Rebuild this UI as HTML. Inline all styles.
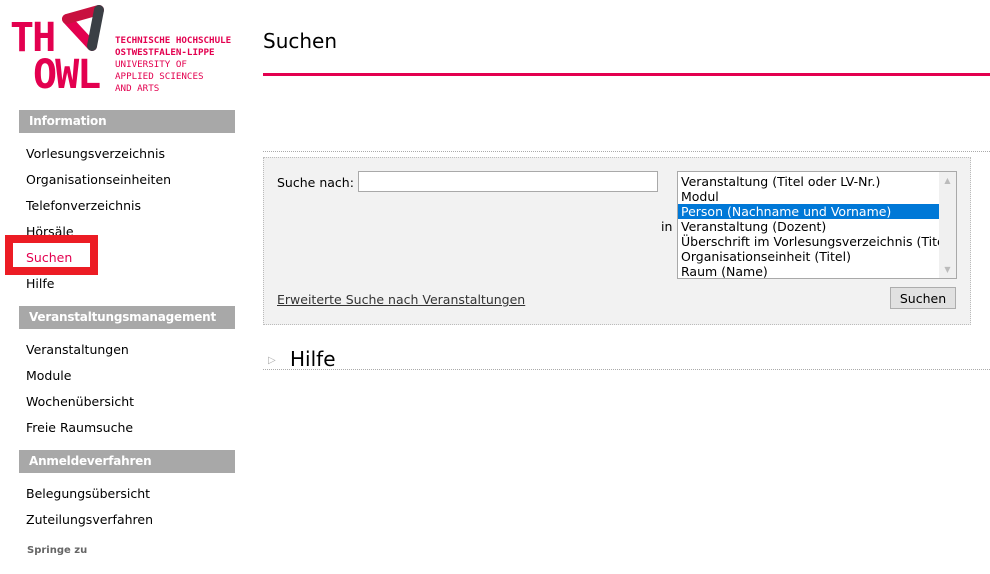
<!DOCTYPE html>
<html><head><meta charset="utf-8"><style>
body{margin:0;width:990px;height:574px;background:#fff;font-family:Verdana,"DejaVu Sans","Liberation Sans",sans-serif;position:relative;overflow:hidden;color:#000}
.a{position:absolute;white-space:nowrap}
.h{position:absolute;left:19px;width:216px;height:23px;background:#a8a8a8;color:#fff;font-weight:bold;font-size:12px;letter-spacing:-0.2px;line-height:23px;padding-left:10px;box-sizing:border-box;overflow:hidden}
.i{position:absolute;left:26px;font-size:12.5px}
.logo{color:#e3004f;font-family:"DejaVu Sans Mono","Liberation Mono",monospace;font-size:9.2px;line-height:12px;left:115px;top:35px}
.big{font-family:"DejaVu Sans Mono","Liberation Mono",monospace;font-weight:bold;color:#e3004f;font-size:40px;letter-spacing:-2px;line-height:34px}
.opt{height:15px;line-height:15px;padding-left:3px;font-size:12.5px}
</style></head><body>
<div class="a big" style="left:10px;top:21px">TH</div>
<div class="a big" style="left:33px;top:58px">OWL</div>
<svg class="a" style="left:55px;top:0" width="60" height="60" viewBox="0 0 60 60">
<line x1="12" y1="19" x2="37" y2="46" stroke="#e3004f" stroke-width="10" stroke-linecap="round"/>
<line x1="12" y1="19" x2="44" y2="10" stroke="#c8103f" stroke-width="10" stroke-linecap="round"/>
<line x1="44" y1="10" x2="37" y2="46" stroke="#3a3f45" stroke-width="10" stroke-linecap="round"/>
</svg>
<div class="a logo"><b>TECHNISCHE HOCHSCHULE<br>OSTWESTFALEN-LIPPE</b><br>UNIVERSITY OF<br>APPLIED SCIENCES<br>AND ARTS</div>

<div class="h" style="top:110px">Information</div>
<div class="i" style="top:146px">Vorlesungsverzeichnis</div>
<div class="i" style="top:172px">Organisationseinheiten</div>
<div class="i" style="top:198px">Telefonverzeichnis</div>
<div class="i" style="top:224px">Hörsäle</div>
<div class="a" style="left:5px;top:235px;width:93px;height:40px;box-sizing:border-box;border:8px solid #ec1c24"></div>
<div class="i" style="top:250px;color:#e3004f">Suchen</div>
<div class="i" style="top:276px">Hilfe</div>
<div class="h" style="top:306px">Veranstaltungsmanagement</div>
<div class="i" style="top:342px">Veranstaltungen</div>
<div class="i" style="top:368px">Module</div>
<div class="i" style="top:394px">Wochenübersicht</div>
<div class="i" style="top:420px">Freie Raumsuche</div>
<div class="h" style="top:450px">Anmeldeverfahren</div>
<div class="i" style="top:486px">Belegungsübersicht</div>
<div class="i" style="top:512px">Zuteilungsverfahren</div>
<div class="a" style="left:27px;top:545px;font-size:10px;font-weight:bold;color:#666">Springe zu</div>

<div class="a" style="left:263px;top:29px;font-size:20px">Suchen</div>
<div class="a" style="left:263px;top:73px;width:727px;height:3px;background:#e3004f"></div>
<div class="a" style="left:263px;top:151px;width:727px;border-top:1px dotted #aaa"></div>
<div class="a" style="left:263px;top:157px;width:708px;height:168px;background:#f2f2f2;border:1px dotted #bbb;box-sizing:border-box"></div>
<div class="a" style="left:277px;top:175px;font-size:12.5px">Suche nach:</div>
<div class="a" style="left:358px;top:171px;width:300px;height:21px;background:#fff;border:1px solid #a9a9a9;box-sizing:border-box"></div>
<div class="a" style="left:661px;top:219px;font-size:12.5px">in</div>
<div class="a" style="left:677px;top:171px;width:280px;height:108px;background:#fff;border:1px solid #a9a9a9;box-sizing:border-box;overflow:hidden;padding-top:2px">
<div style="width:261px;overflow:hidden">
<div class="opt">Veranstaltung (Titel oder LV-Nr.)</div>
<div class="opt">Modul</div>
<div class="opt" style="background:#0078d7;color:#fff">Person (Nachname und Vorname)</div>
<div class="opt">Veranstaltung (Dozent)</div>
<div class="opt">Überschrift im Vorlesungsverzeichnis (Titel)</div>
<div class="opt">Organisationseinheit (Titel)</div>
<div class="opt">Raum (Name)</div>
</div>
<div style="position:absolute;right:0;top:0;width:17px;height:106px;background:#f0f0f0;color:#bbb;font-size:8px;text-align:center"><div style="margin-top:4px">▲</div><div style="position:absolute;bottom:4px;width:17px">▼</div></div>
</div>
<div class="a" style="left:277px;top:292px;font-size:12.5px;text-decoration:underline;color:#333">Erweiterte Suche nach Veranstaltungen</div>
<div class="a" style="left:890px;top:287px;width:66px;height:22px;background:#e1e1e1;border:1px solid #adadad;box-sizing:border-box;font-size:12.5px;text-align:center;line-height:21px">Suchen</div>
<div class="a" style="left:268px;top:355px;color:#aaa;font-size:10px">▷</div>
<div class="a" style="left:290px;top:347px;font-size:20px">Hilfe</div>
<div class="a" style="left:263px;top:369px;width:727px;border-top:1px dotted #aaa"></div>
</body></html>
